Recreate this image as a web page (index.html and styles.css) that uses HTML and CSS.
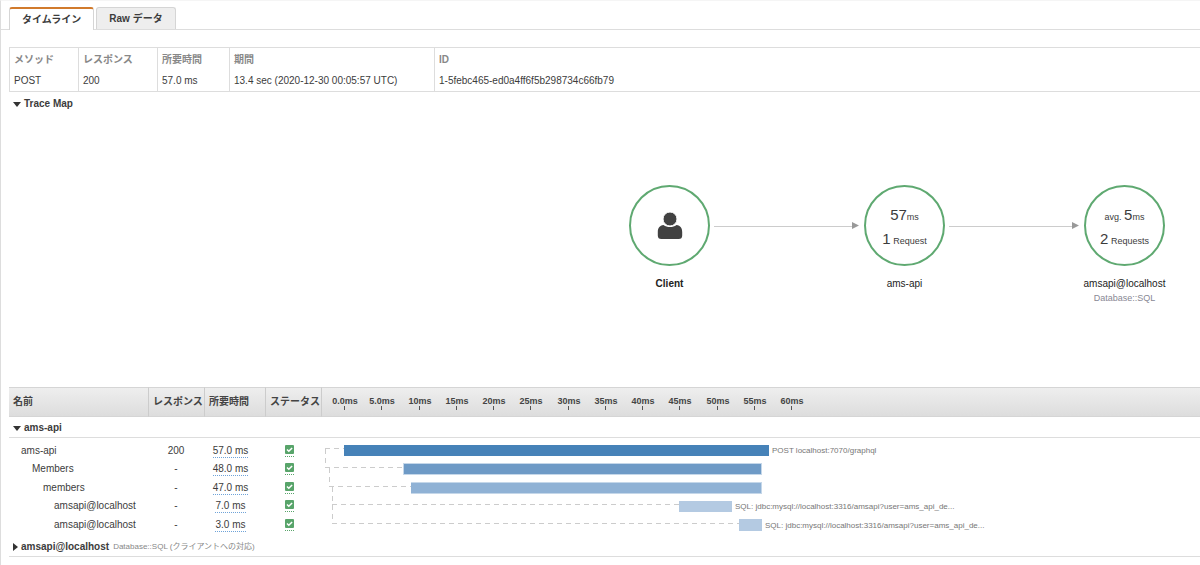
FILE: index.html
```html
<!DOCTYPE html>
<html lang="ja">
<head>
<meta charset="utf-8">
<title>Trace</title>
<link rel="stylesheet" href="styles.css">
</head>
<body>
<svg class="defs" aria-hidden="true">
  <symbol id="ok" viewBox="0 0 9 9">
    <rect width="9" height="9" rx="1" fill="#58a46a"/>
    <path d="M2 4.5 3.8 6.3 7.1 2.9" fill="none" stroke="#fff" stroke-width="1.5"/>
  </symbol>
</svg>
<main class="page">
  <nav class="tabs">
    <button class="tab tab-active" type="button">タイムライン</button>
    <button class="tab" type="button">Raw データ</button>
  </nav>

  <table class="summary">
    <colgroup><col class="s-method"><col class="s-response"><col class="s-duration"><col class="s-age"><col></colgroup>
    <thead>
      <tr><th>メソッド</th><th>レスポンス</th><th>所要時間</th><th>期間</th><th>ID</th></tr>
    </thead>
    <tbody>
      <tr><td>POST</td><td>200</td><td>57.0 ms</td><td>13.4 sec (2020-12-30 00:05:57 UTC)</td><td>1-5febc465-ed0a4ff6f5b298734c66fb79</td></tr>
    </tbody>
  </table>

  <button class="toggle map-toggle" type="button"><span class="arrow arrow-down"></span>Trace Map</button>
  <section class="map">
    <svg class="edges" aria-hidden="true">
      <path d="M705 112.5H844M940 112.5H1064" stroke="#ccc"/>
      <path d="M843 108 850 111.500 843 115ZM1063 108 1070 111.500 1063 115Z" fill="#999"/>
    </svg>
    <div class="node node-client">
      <div class="circle">
        <svg width="26" height="28" viewBox="0 0 26 28" fill="#414141">
          <path d="M6.500 13C2.500 13.500.8 16 .8 20v3.500q0 3.500 3.500 3.500h17.400q3.500 0 3.500-3.500V20c0-4-1.700-6.500-5.700-7-2 1.500-4 2.100-6.500 2.100S8.500 14.500 6.500 13Z"/>
          <circle cx="13" cy="7" r="7" stroke="#fff"/>
        </svg>
      </div>
      <strong class="node-name">Client</strong>
    </div>
    <div class="node node-api">
      <div class="circle circle-stats">
        <div><span class="big">57</span>ms</div>
        <div><span class="big">1</span> Request</div>
      </div>
      <div class="node-name">ams-api</div>
    </div>
    <div class="node node-db">
      <div class="circle circle-stats">
        <div>avg. <span class="big">5</span>ms</div>
        <div><span class="big">2</span> Requests</div>
      </div>
      <div class="node-name">amsapi@localhost</div>
      <div class="node-type">Database::SQL</div>
    </div>
  </section>

  <table class="trace">
    <colgroup><col class="t-name"><col class="t-response"><col class="t-duration"><col class="t-status"><col></colgroup>
    <thead>
      <tr>
        <th>名前</th><th>レスポンス</th><th>所要時間</th><th>ステータス</th>
        <th class="chart-cell">
          <svg class="axis">
            <g text-anchor="middle">
              <text x="23" y="16">0.0ms</text><text x="60" y="16">5.0ms</text><text x="98" y="16">10ms</text><text x="135" y="16">15ms</text><text x="172" y="16">20ms</text><text x="209" y="16">25ms</text><text x="247" y="16">30ms</text><text x="284" y="16">35ms</text><text x="321" y="16">40ms</text><text x="358" y="16">45ms</text><text x="396" y="16">50ms</text><text x="433" y="16">55ms</text><text x="470" y="16">60ms</text>
            </g>
            <path d="M22.500 18v4m37-4v4m38-4v4m37-4v4m37-4v4m37-4v4m38-4v4m37-4v4m37-4v4m37-4v4m38-4v4m37-4v4m37-4v4" stroke="#555"/>
          </svg>
        </th>
      </tr>
    </thead>
    <tbody>
      <tr class="group"><th colspan="5"><button class="toggle" type="button"><span class="arrow arrow-down"></span>ams-api</button></th></tr>
    </tbody>
    <tbody class="spans">
      <tr>
        <td class="depth-1">ams-api</td><td>200</td><td><span class="time">57.0 ms</span></td><td><span class="status"><svg role="img" aria-label="OK"><use href="#ok"/></svg></span></td>
        <td class="chart-cell" rowspan="5">
          <svg class="chart">
            <g class="links">
              <path d="M3 7.500H22M3 26.500H82M7 45.500H89M10 63.500H357M10 82.500H417"/>
              <path d="M3.500 8V27M7.500 27V45M10.500 46V82"/>
            </g>
            <rect x="22" y="4" width="425" height="11" fill="#4682b8"/>
            <rect x="81" y="22" width="359" height="12" fill="#c5d7e9"/>
            <rect x="82" y="23" width="357" height="10" fill="#6e9ac6"/>
            <rect x="89" y="41" width="351" height="12" fill="#c5d7e9"/>
            <rect x="89" y="42" width="350" height="10" fill="#90b2d5"/>
            <rect x="357" y="60" width="53" height="11" fill="#b4cae2"/>
            <rect x="417" y="78" width="23" height="12" fill="#b4cae2"/>
            <text x="450" y="12">POST localhost:7070/graphql</text>
            <text x="413" y="68">SQL: jdbc:mysql://localhost:3316/amsapi?user=ams_api_de...</text>
            <text x="443" y="87">SQL: jdbc:mysql://localhost:3316/amsapi?user=ams_api_de...</text>
          </svg>
        </td>
      </tr>
      <tr><td class="depth-2">Members</td><td>-</td><td><span class="time">48.0 ms</span></td><td><span class="status"><svg role="img" aria-label="OK"><use href="#ok"/></svg></span></td></tr>
      <tr><td class="depth-3">members</td><td>-</td><td><span class="time">47.0 ms</span></td><td><span class="status"><svg role="img" aria-label="OK"><use href="#ok"/></svg></span></td></tr>
      <tr><td class="depth-4">amsapi@localhost</td><td>-</td><td><span class="time">7.0 ms</span></td><td><span class="status"><svg role="img" aria-label="OK"><use href="#ok"/></svg></span></td></tr>
      <tr><td class="depth-4">amsapi@localhost</td><td>-</td><td><span class="time">3.0 ms</span></td><td><span class="status"><svg role="img" aria-label="OK"><use href="#ok"/></svg></span></td></tr>
    </tbody>
    <tbody>
      <tr class="group"><th colspan="5"><button class="toggle" type="button"><span class="arrow arrow-right"></span>amsapi@localhost <span class="note">Database::SQL (クライアントへの対応)</span></button></th></tr>
    </tbody>
  </table>
</main>
</body>
</html>
```
FILE: styles.css
```css
* { box-sizing: border-box; }
body {
  margin: 0;
  background: #fff;
  color: #3c3c3c;
  font: 10px/14px "Liberation Sans", "Noto Sans CJK JP", sans-serif;
  overflow-x: hidden;
}
button { font: inherit; color: inherit; }
table { border-collapse: separate; border-spacing: 0; table-layout: fixed; width: 100%; }
th, td { padding: 0; text-align: left; }
svg { display: block; }
.defs { position: absolute; width: 0; height: 0; }
.page { min-height: 100vh; padding-left: 8px; border-left: 1px solid #ddd; border-top: 1px solid #f5f5f5; }

.tabs {
  display: flex;
  align-items: flex-end;
  gap: 2px;
  height: 29px;
  margin-left: -8px;
  padding-left: 8px;
  border-bottom: 1px solid #ddd;
}
.tab {
  height: 22px;
  padding: 0 12px;
  border: 1px solid #d5d5d5;
  border-bottom: 0;
  border-radius: 3px 3px 0 0;
  background: #eee;
  font-size: 10px;
  font-weight: bold;
}
.tab-active {
  height: 23px;
  margin-bottom: -1px;
  border-top: 2px solid #d17a2c;
  background: #fff;
}

.summary { margin-top: 17px; border: 1px solid #ddd; border-right: 0; }
.summary th { height: 22px; padding: 2px 0 0 4px; color: #888; }
.summary td { height: 21px; padding-left: 4px; }
.summary th + th, .summary td + td { border-left: 1px solid #ddd; }
.s-method { width: 68px; }
.s-response { width: 79px; }
.s-duration { width: 72px; }
.s-age { width: 205px; }

.toggle {
  display: flex;
  align-items: center;
  gap: 3px;
  padding: 2px 0 0 4px;
  border: 0;
  background: none;
  font-weight: bold;
}
.map-toggle { height: 22px; }
.arrow { border: 4px solid transparent; }
.arrow-down { border-top: 5px solid #333; border-bottom: 0; }
.arrow-right { border-left: 5px solid #333; border-right: 0; }
.note { margin-left: 1px; color: #888; font-size: 8px; font-weight: normal; }

.map { position: relative; height: 273px; overflow: hidden; }
.edges { width: 100%; height: 100%; }
.node {
  position: absolute;
  top: 71px;
  display: flex;
  flex-direction: column;
  align-items: center;
  width: 121px;
}
.node-client { left: 600px; }
.node-api { left: 835px; }
.node-db { left: 1055px; }
.circle {
  display: flex;
  flex-direction: column;
  align-items: center;
  justify-content: center;
  gap: 2px;
  width: 81px;
  height: 81px;
  margin-bottom: 11px;
  border: 2px solid #5fa971;
  border-radius: 50%;
  font-size: 9px;
  line-height: 20px;
}
.circle-stats { padding-top: 4px; }
.big { font-size: 15px; }
.node-name { color: #222; }
.node-type { color: #888894; font-size: 9px; }

.trace thead th {
  height: 30px;
  padding-left: 4px;
  border-top: 1px solid #d5d5d5;
  border-bottom: 1px solid #d5d5d5;
  background: linear-gradient(#eee, #ddd);
  color: #444;
}
.trace thead th + th { border-left: 1px solid #ccc; }
.trace thead .chart-cell { padding: 0; }
.t-name { width: 139px; }
.t-response { width: 56px; }
.t-duration { width: 61px; }
.t-status { width: 56px; }
.axis { width: 100%; height: 28px; }
.axis text { fill: #444; font-size: 9px; }
.group th { height: 21px; border-bottom: 1px solid #ddd; }
.spans::before { content: ""; display: block; height: 3px; }
.spans::after { content: ""; display: block; height: 2px; }
.spans tr { height: 19px; }
.spans tr:nth-child(even) { height: 18px; }
.spans td { text-align: center; }
.spans td:nth-child(3), .spans td:nth-child(4) { padding-right: 8px; }
.spans .depth-1 { padding-left: 12px; text-align: left; }
.spans .depth-2 { padding-left: 23px; text-align: left; }
.spans .depth-3 { padding-left: 34px; text-align: left; }
.spans .depth-4 { padding-left: 45px; text-align: left; }
.time { display: inline-block; line-height: 12px; border-bottom: 1px dotted #6fa3d8; }
.status { display: inline-block; vertical-align: middle; height: 12px; border-bottom: 1px dotted #58a46a; }
.status svg { width: 9px; height: 9px; }
.spans .chart-cell { padding: 0; border-left: 1px solid transparent; vertical-align: top; }
.chart { width: 100%; height: 93px; }
.chart text { fill: #777; font-size: 8px; text-anchor: start; }
.links { fill: none; stroke: #ccc; stroke-dasharray: 5 4; }
```
